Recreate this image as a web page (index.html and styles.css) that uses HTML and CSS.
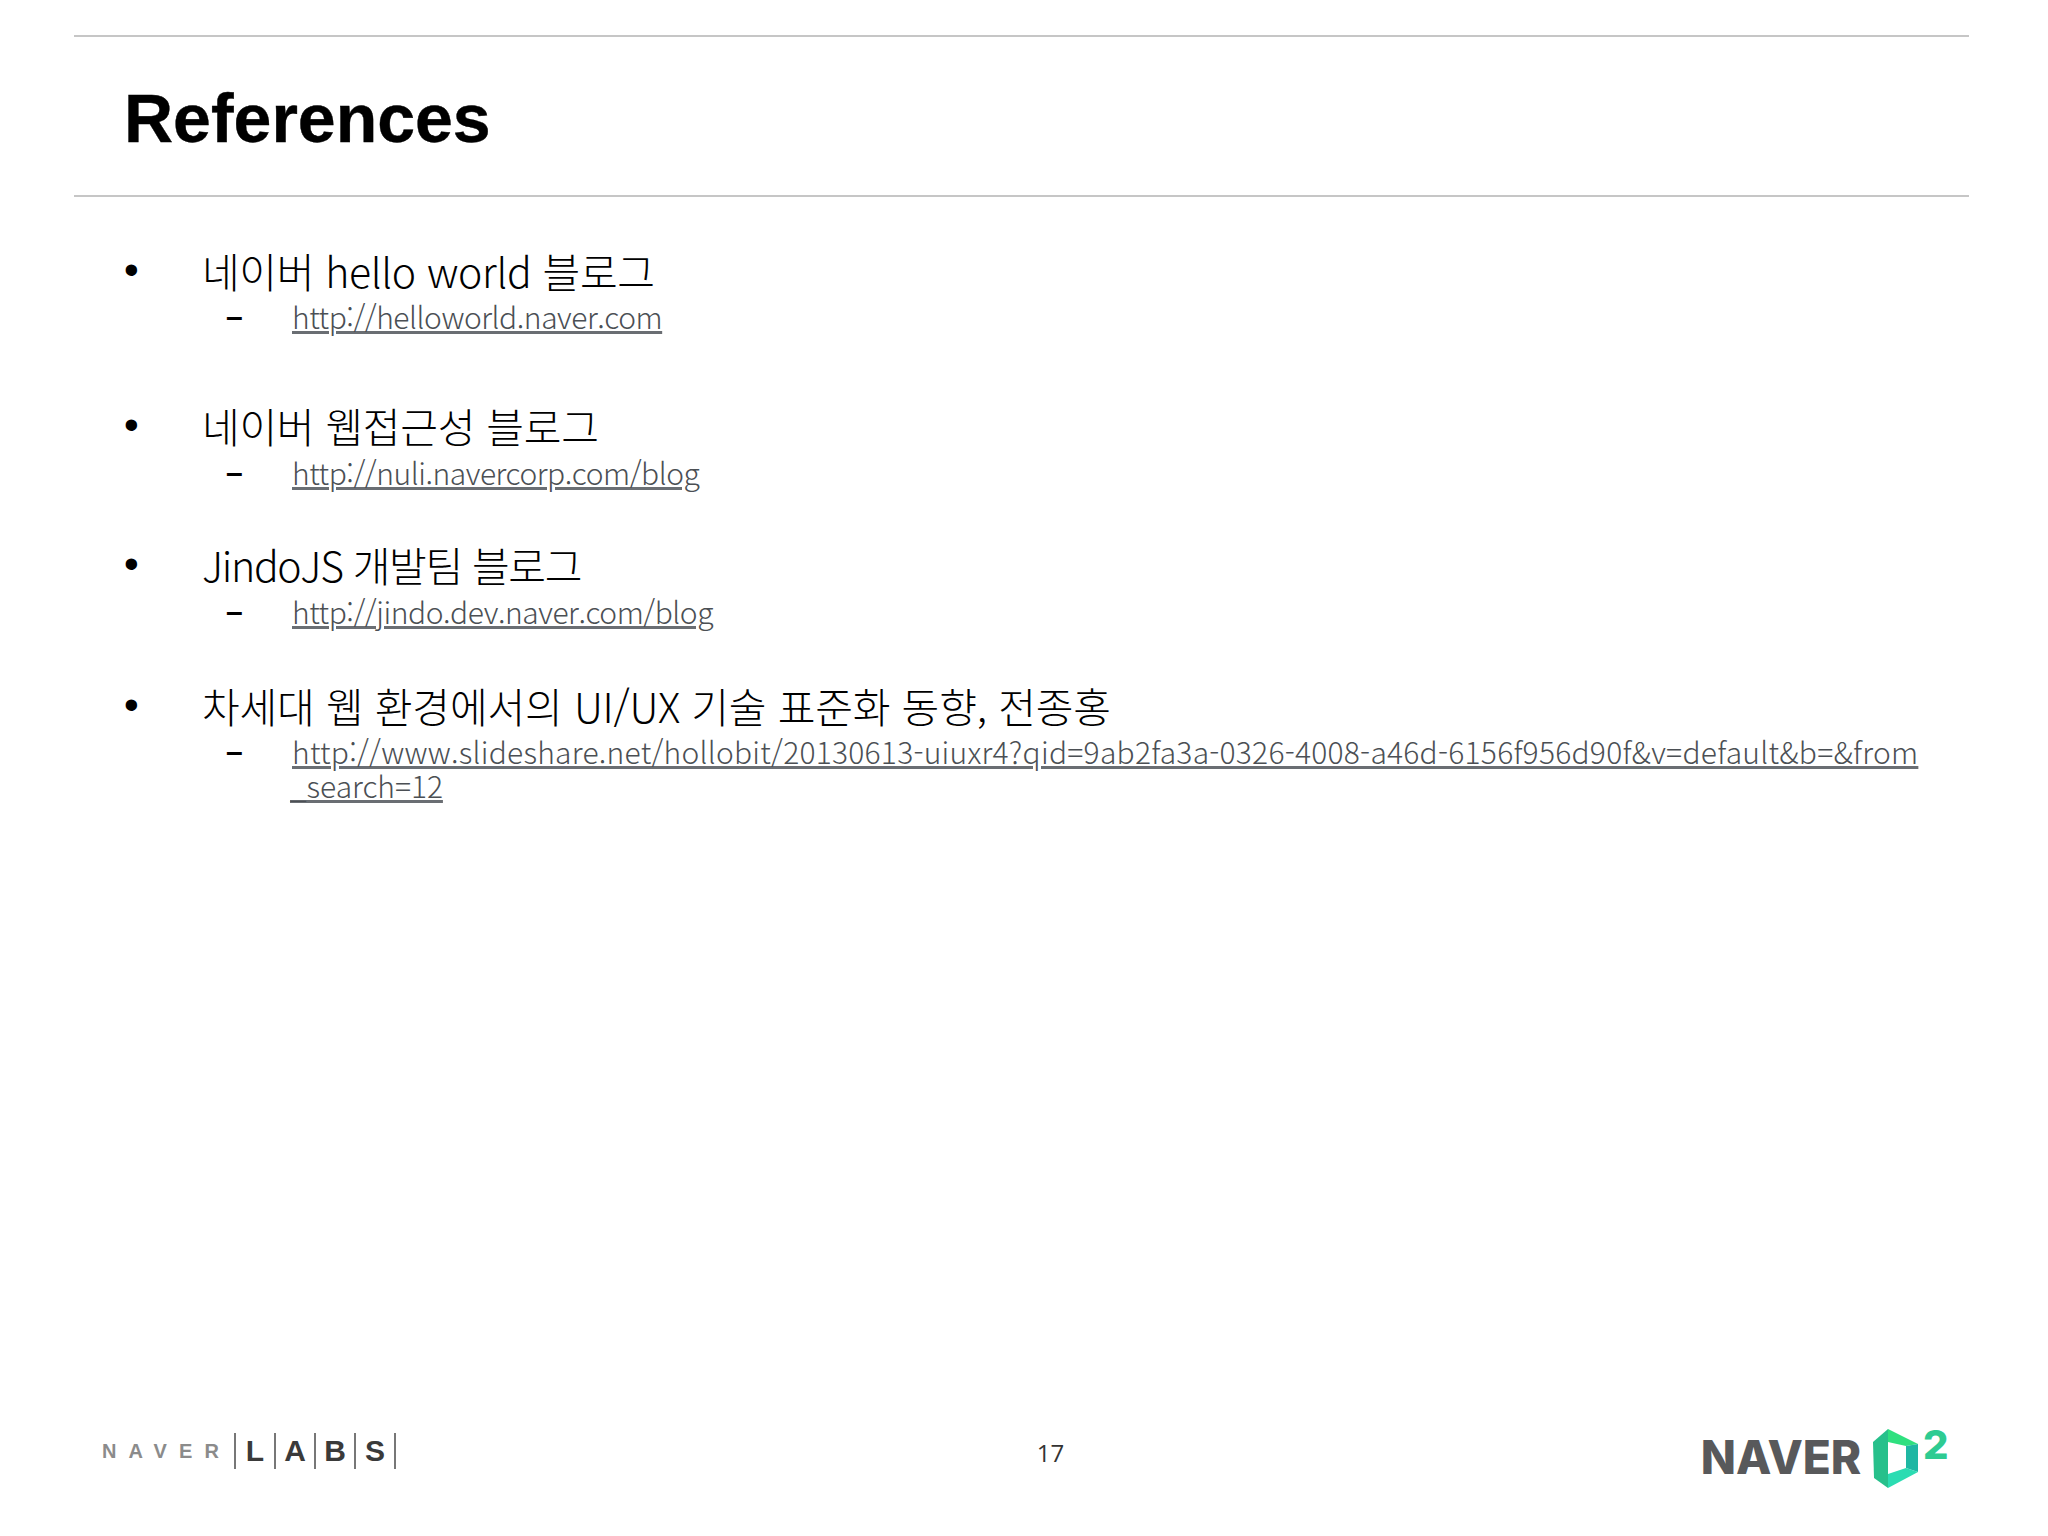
FILE: index.html
```html
<!DOCTYPE html>
<html lang="ko">
<head>
<meta charset="utf-8">
<title>References</title>
<link rel="stylesheet" href="styles.css">
</head>
<body>
<div class="slide">
  <header class="head"><h1 class="title">References</h1></header>
  <main class="refs">
    <section class="ref ref-1">
      <div class="item"><span class="bullet">•</span><span class="name">네이버 hello world 블로그</span></div>
      <div class="sub"><span class="dash">–</span><a class="link" href="#">http://helloworld.naver.com</a></div>
    </section>
    <section class="ref ref-2">
      <div class="item"><span class="bullet">•</span><span class="name">네이버 웹접근성 블로그</span></div>
      <div class="sub"><span class="dash">–</span><a class="link" href="#">http://nuli.navercorp.com/blog</a></div>
    </section>
    <section class="ref ref-3">
      <div class="item"><span class="bullet">•</span><span class="name">JindoJS 개발팀 블로그</span></div>
      <div class="sub"><span class="dash">–</span><a class="link" href="#">http://jindo.dev.naver.com/blog</a></div>
    </section>
    <section class="ref ref-4">
      <div class="item"><span class="bullet">•</span><span class="name">차세대 웹 환경에서의 UI/UX 기술 표준화 동향, 전종홍</span></div>
      <div class="sub"><span class="dash">–</span><a class="link" href="#">http://www.slideshare.net/hollobit/20130613-uiuxr4?qid=9ab2fa3a-0326-4008-a46d-6156f956d90f&amp;v=default&amp;b=&amp;from<br><span class="link-tail">_search=12</span></a></div>
    </section>
  </main>
  <footer class="foot">
    <div class="labs">
      <span class="labs-naver">NAVER</span>
      <span class="labs-cell">L</span><span class="labs-cell">A</span><span class="labs-cell">B</span><span class="labs-cell labs-last">S</span>
    </div>
    <div class="page">17</div>
    <div class="d2">
      <span class="d2-naver">NAVER</span>
      <svg class="d2-mark" width="46" height="60" viewBox="0 0 46 60" aria-hidden="true">
        <polygon points="0,14 15,1 15,60 1,50" fill="#27c08b"/>
        <polygon points="15,1 45,16 33,18 15,14" fill="#2fe07f"/>
        <polygon points="45,16 45,44 33,40 33,18" fill="#1fb7a3"/>
        <polygon points="15,46 33,40 45,44 15,60" fill="#2bdcb2"/>
      </svg>
      <span class="d2-two">2</span>
    </div>
  </footer>
</div>
</body>
</html>
```
FILE: styles.css
```css
* { box-sizing: border-box; }
html, body { margin: 0; padding: 0; background: #fff; }
.slide {
  width: 2048px;
  height: 1536px;
  padding-top: 35px;
  display: flex;
  flex-direction: column;
  font-family: "Noto Sans CJK KR", "Open Sans", sans-serif;
  font-weight: 300;
  color: #000;
}
.head {
  margin: 0 79px 0 74px;
  height: 162px;
  border-top: 2px solid #c6c6c6;
  border-bottom: 2px solid #c6c6c6;
  padding: 42px 0 0 50px;
}
.title {
  margin: 0;
  font: 700 68px/78px "Liberation Sans", sans-serif;
  -webkit-text-stroke: 0.4px #000;
}
.refs { padding: 46px 0 0 124px; }
.ref-2 { margin-top: 65px; }
.ref-3 { margin-top: 48px; }
.ref-4 { margin-top: 50px; }
.item { display: flex; align-items: center; height: 54px; }
.bullet { width: 79px; flex: none; font: 400 42px/54px "Liberation Sans", sans-serif; }
.name { margin-left: -1px; font-size: 41px; line-height: 54px; white-space: nowrap; }
.ref-1 .name { letter-spacing: -0.35px; }
.ref-2 .name { letter-spacing: -0.3px; }
.ref-3 .name { letter-spacing: -1.35px; }
.ref-4 .name { letter-spacing: -0.17px; }
.sub { display: flex; padding-left: 102px; margin-top: 2px; }
.ref-2 .sub, .ref-3 .sub { margin-top: 3px; }
.dash { width: 66px; height: 34px; flex: none; font: 700 30px/36px "Liberation Sans", sans-serif; }
.link {
  color: #4b4f54;
  font-size: 30px;
  line-height: 34px;
  letter-spacing: -0.47px;
  white-space: nowrap;
  text-decoration: underline;
  text-decoration-thickness: 3px;
  text-decoration-color: #6a6e73;
}
.ref-4 .link { letter-spacing: 0.24px; }
.ref-4 .link-tail { letter-spacing: -0.05px; margin-left: -2px; }
.foot {
  margin-top: auto;
  height: 124px;
  padding: 0 99px 0 102px;
  display: grid;
  grid-template-columns: 1fr auto 1fr;
  align-items: start;
}
.labs { display: flex; align-items: center; height: 36px; margin-top: 21px; font-family: "Liberation Sans", sans-serif; font-weight: 700; }
.labs-naver { width: 132px; flex: none; font-size: 20px; letter-spacing: 12.1px; color: #8b8b8b; }
.labs-cell {
  width: 40px; height: 36px; flex: none; border-left: 2px solid #777;
  font-size: 30px; line-height: 36px; text-align: center; color: #3a3a3a;
}
.labs-last { border-right: 2px solid #777; width: 42px; }
.page { margin: 26px 0 0 50px; font: 400 24px/30px "Open Sans", sans-serif; color: #333; text-align: center; }
.d2 { display: flex; justify-content: flex-end; align-items: flex-start; height: 70px; margin-top: 15px; }
.d2-naver { font: 800 46px/60px Inter, sans-serif; color: #58595b; margin: 0 12px 0 0; letter-spacing: -0.1px; }
.d2-mark { margin-top: 1px; flex: none; }
.d2-two { width: 26px; margin-left: 4px; font: 800 40px/36px Inter, sans-serif; color: #2ecb92; }
```
